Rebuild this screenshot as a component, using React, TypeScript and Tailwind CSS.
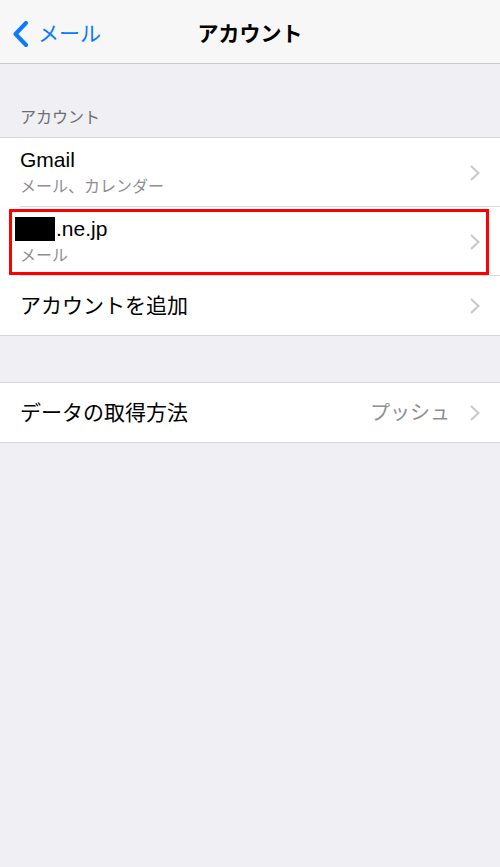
import { ReactNode } from 'react';

const font = { fontFamily: '"Liberation Sans", "Noto Sans CJK JP", sans-serif' };

function Chevron() {
  return (
    <svg width="12" height="18" viewBox="0 0 12 18" className="shrink-0">
      <path d="M2 2 L9.5 9 L2 16" fill="none" stroke="#c7c7cc" strokeWidth="2" />
    </svg>
  );
}

function Row({
  children,
  height,
  last,
  value,
}: {
  children: ReactNode;
  height: string;
  last?: boolean;
  value?: string;
}) {
  return (
    <div className={`relative flex items-center pl-5 pr-[19px] ${height}`}>
      <div className="flex-1 min-w-0">{children}</div>
      {value && <span className="mr-[19px] text-[20px] text-[#8e8e93]">{value}</span>}
      <Chevron />
      {!last && <div className="absolute bottom-0 left-5 right-0 h-px bg-[#dcdce0]" />}
    </div>
  );
}

export default function App() {
  return (
    <div className="min-h-[867px] w-[500px] bg-[#efeff4]" style={font}>
      {/* Nav bar */}
      <div className="relative flex h-[64px] items-center justify-center border-b border-[#c8c7cc] bg-[#f7f7f8] pt-[4px]">
        <div className="absolute left-[12px] top-[21px] flex items-center gap-[9px]">
          <svg width="17" height="26" viewBox="0 0 17 26">
            <path d="M14 2 L3.5 13 L14 24" fill="none" stroke="#0a7aff" strokeWidth="4" strokeLinecap="round" strokeLinejoin="round" />
          </svg>
          <span className="-mt-[2px] text-[21px] leading-none text-[#0a7aff]">メール</span>
        </div>
        <span className="text-[21px] font-bold text-black">アカウント</span>
      </div>

      {/* Section header */}
      <div className="px-5 pt-[46px] pb-[11px] text-[16px] leading-none text-[#6d6d72]">アカウント</div>

      {/* Accounts group */}
      <div className="border-y border-[#d6d6da] bg-white">
        <Row height="h-[69px]">
          <div className="-mt-[2px] text-[21px] leading-[24px] text-black">Gmail</div>
          <div className="mt-[6px] text-[16px] leading-[18px] text-[#8e8e93]">メール、カレンダー</div>
        </Row>
        <div className="relative">
          <Row height="h-[69px]">
            <div className="-mt-[2px] flex items-center text-[21px] leading-[24px] text-black">
              <span className="-ml-[5px] mr-[1px] inline-block h-[24px] w-[40px] bg-black" />
              .ne.jp
            </div>
            <div className="mt-[6px] text-[16px] leading-[18px] text-[#8e8e93]">メール</div>
          </Row>
          <div className="pointer-events-none absolute left-[9px] right-[11px] top-[2px] bottom-[1px] border-[3px] border-[#ff0000]" />
        </div>
        <Row height="h-[59px]" last>
          <div className="text-[21px] text-black">アカウントを追加</div>
        </Row>
      </div>

      {/* Fetch method */}
      <div className="mt-[46px] border-y border-[#d6d6da] bg-white">
        <Row height="h-[59px]" last value="プッシュ">
          <div className="text-[21px] text-black">データの取得方法</div>
        </Row>
      </div>
    </div>
  );
}
